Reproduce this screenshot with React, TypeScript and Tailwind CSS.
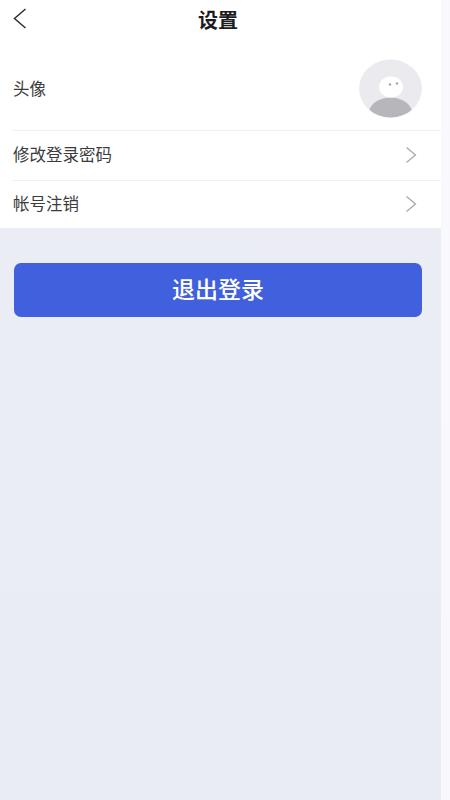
import React from "react";

const font = { fontFamily: '"Noto Sans CJK SC", sans-serif' };

function Chevron() {
  return (
    <svg width="12" height="18" viewBox="0 0 12 18" fill="none" className="shrink-0">
      <path d="M1.5 1.5 L10.5 9 L1.5 16.5" stroke="#a9a9ad" strokeWidth="1.3" />
    </svg>
  );
}

function Row({ label, height }: { label: string; height: string }) {
  return (
    <div className={`flex items-center justify-between pr-[24px] ${height}`}>
      <span className="text-[16.5px] text-[#3c3c40] leading-none pb-[2px]">{label}</span>
      <Chevron />
    </div>
  );
}

export default function App() {
  return (
    <div
      className="w-[450px] h-[800px] flex bg-[#f9f9fd] overflow-hidden font-['Noto_Sans_CJK_SC',sans-serif]"
      style={font}
    >
      <div className="w-[441px] h-full flex flex-col bg-gradient-to-b from-[#edeef4] to-[#e9ecf5]">
        <div className="bg-white h-[228px] flex flex-col">
          <div className="h-[43px] flex items-center relative justify-center pb-[3px] pr-[5px]">
            <svg
              width="14"
              height="22"
              viewBox="0 0 14 22"
              fill="none"
              className="absolute left-[13px] top-[8px]"
            >
              <path d="M12.5 1 L1.5 10.5 L12.5 20" stroke="#2f2f33" strokeWidth="1.5" />
            </svg>
            <span className="text-[20px] font-bold text-[#1c1c1f] leading-none">设置</span>
          </div>
          <div className="ml-[13px] flex flex-col">
            <div className="flex items-center justify-between h-[88px] border-b border-[#f1f1f4] pr-[19px]">
              <span className="text-[16.5px] text-[#3c3c40] leading-none pt-[3px]">头像</span>
              <svg width="63" height="59" viewBox="0 0 63 59" className="mt-[4px]">
                <defs>
                  <clipPath id="avatarClip">
                    <ellipse cx="31.5" cy="29.5" rx="31.5" ry="29" />
                  </clipPath>
                </defs>
                <ellipse cx="31.5" cy="29.5" rx="31.5" ry="29" fill="#ebebef" />
                <g clipPath="url(#avatarClip)">
                  <ellipse cx="31.5" cy="54" rx="21.5" ry="15.5" fill="#b7b7bb" />
                </g>
                <ellipse cx="32" cy="28" rx="12" ry="10.5" fill="#ffffff" />
                <circle cx="31" cy="25.5" r="1.2" fill="#a6a6aa" />
                <circle cx="38" cy="24.5" r="1.2" fill="#a6a6aa" />
              </svg>
            </div>
            <div className="border-b border-[#f1f1f4] pb-[1px]">
              <Row label="修改登录密码" height="h-[48px]" />
            </div>
            <Row label="帐号注销" height="h-[46px]" />
          </div>
        </div>
        <div className="px-[14px] pr-[19px] pt-[35px]">
          <button className="w-full h-[54px] rounded-[7px] bg-[#4060dd] text-white text-[23px] font-medium flex items-center justify-center pb-[4px]">
            退出登录
          </button>
        </div>
      </div>
    </div>
  );
}
